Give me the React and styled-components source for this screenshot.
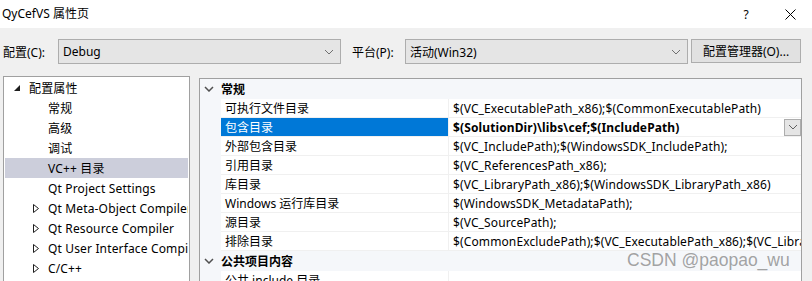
import React from 'react';
import styled, { createGlobalStyle } from 'styled-components';

const Global = createGlobalStyle`
  html, body { margin: 0; padding: 0; background: #f0f0f0; }
  body {
    font-family: "Noto Sans", "Noto Sans CJK SC", sans-serif;
    font-size: 12px;
    color: #000;
  }
  * { box-sizing: border-box; }
`;

const Dialog = styled.div`
  position: relative;
  width: 812px;
  height: 281px;
  overflow: hidden;
  background: #f0f0f0;
  display: flex;
  flex-direction: column;
`;

const TitleBar = styled.div`
  flex: none;
  height: 28px;
  background: #fff;
  display: flex;
  align-items: center;
  padding-left: 2px;
`;

const Title = styled.div`
  flex: 1;
  font-size: 12px;
  line-height: 16px;
`;

const TitleButton = styled.div`
  width: ${p => p.$w}px;
  height: 28px;
  display: flex;
  align-items: center;
  justify-content: center;
  font-size: 12px;
  color: #000;
`;

const Toolbar = styled.div`
  flex: none;
  height: 48px;
  display: flex;
  align-items: flex-start;
  padding: 11px 0 0 3px;
`;

const Label = styled.div`
  width: ${p => p.$w}px;
  margin-left: ${p => p.$ml || 0}px;
  height: 25px;
  display: flex;
  align-items: center;
  white-space: nowrap;
`;

const Select = styled.div`
  width: 283px;
  height: 25px;
  border: 1px solid #adadad;
  background: #e5e5e5;
  display: flex;
  align-items: center;
  padding: 0 6px 0 4px;
`;

const SelectText = styled.div`
  flex: 1;
  white-space: nowrap;
`;

const Button = styled.div`
  margin-left: 3px;
  width: 110px;
  height: 24px;
  border: 1px solid #adadad;
  background: #e1e1e1;
  display: flex;
  align-items: center;
  justify-content: center;
  white-space: nowrap;
`;

const Content = styled.div`
  flex: 1;
  display: flex;
  align-items: flex-start;
  padding-left: 3px;
`;

const TreePanel = styled.div`
  width: 187px;
  height: 230px;
  flex: none;
  background: #fff;
  border: 1px solid #a0a0a0;
  padding: 1px 1px 0 1px;
  overflow: hidden;
`;

const TreeRow = styled.div`
  height: 20px;
  display: flex;
  align-items: center;
  padding-left: ${p => 5 + p.$level * 19}px;
  background: ${p => (p.$selected ? '#cccedb' : 'transparent')};
  white-space: nowrap;
  overflow: hidden;
  letter-spacing: 0.15px;
`;

const Expander = styled.div`
  width: 13px;
  height: 20px;
  flex: none;
  margin-right: 6px;
  display: flex;
  align-items: center;
  justify-content: center;
`;

const GridPanel = styled.div`
  margin-left: 9px;
  margin-top: 2px;
  width: 603px;
  height: 230px;
  flex: none;
  background: #fff;
  border: 1px solid #a0a0a0;
  overflow: hidden;
`;

const CategoryRow = styled.div`
  height: 20px;
  display: flex;
  align-items: center;
  background: #f5f7fa;
  font-weight: bold;
`;

const Gutter = styled.div`
  width: 21px;
  flex: none;
  align-self: stretch;
  background: #f5f7fa;
  display: flex;
  align-items: center;
  justify-content: center;
  padding-right: 4px;
`;

const PropRow = styled.div`
  height: 19px;
  display: flex;
`;

const NameCell = styled.div`
  width: 228px;
  flex: none;
  display: flex;
  align-items: center;
  padding-left: 4px;
  border-right: 1px solid #f0f0f0;
  border-bottom: 1px solid #f0f0f0;
  background: ${p => (p.$selected ? '#0078d7' : '#fff')};
  color: ${p => (p.$selected ? '#fff' : '#000')};
  white-space: nowrap;
  overflow: hidden;
`;

const ValueCell = styled.div`
  flex: 1;
  min-width: 0;
  display: flex;
  align-items: center;
  padding-left: 4px;
  border-bottom: 1px solid #f0f0f0;
  font-weight: ${p => (p.$bold ? 'bold' : 'normal')};
  white-space: nowrap;
  overflow: hidden;
  letter-spacing: 0.12px;
`;

const ValueText = styled.div`
  flex: 1;
  min-width: 0;
  overflow: hidden;
`;

const DropButton = styled.div`
  width: 17px;
  height: 17px;
  flex: none;
  border: 1px solid #adadad;
  background: #e5e5e5;
  display: flex;
  align-items: center;
  justify-content: center;
`;

const Watermark = styled.div`
  position: absolute;
  left: 627px;
  top: 250px;
  font-family: "Liberation Sans", Arial, sans-serif;
  font-size: 17.5px;
  color: rgba(140, 140, 140, 0.8);
  white-space: nowrap;
`;

const Chevron = ({ w = 8, h = 4, color = '#606060', sw = 1 }) => (
  <svg width={w + 2} height={h + 2} viewBox={`-1 -1 ${w + 2} ${h + 2}`}>
    <polyline points={`0,0 ${w / 2},${h} ${w},0`} fill="none" stroke={color} strokeWidth={sw} />
  </svg>
);

const OpenTriangle = () => (
  <svg width="6" height="6" viewBox="0 0 6 6">
    <polygon points="6,0 6,6 0,6" fill="#1e1e1e" />
  </svg>
);

const ClosedTriangle = () => (
  <svg width="6" height="9" viewBox="0 0 6 9">
    <polygon points="0.5,0.5 5.5,4.5 0.5,8.5" fill="none" stroke="#1e1e1e" strokeWidth="1" />
  </svg>
);

const CloseIcon = () => (
  <svg width="11" height="11" viewBox="0 0 11 11">
    <path d="M0.5 0.5 L10.5 10.5 M10.5 0.5 L0.5 10.5" stroke="#000" strokeWidth="1" />
  </svg>
);

const tree = [
  { label: '配置属性', level: 0, exp: 'open' },
  { label: '常规', level: 1 },
  { label: '高级', level: 1 },
  { label: '调试', level: 1 },
  { label: 'VC++ 目录', level: 1, selected: true },
  { label: 'Qt Project Settings', level: 1 },
  { label: 'Qt Meta-Object Compiler', level: 1, exp: 'closed' },
  { label: 'Qt Resource Compiler', level: 1, exp: 'closed' },
  { label: 'Qt User Interface Compiler', level: 1, exp: 'closed' },
  { label: 'C/C++', level: 1, exp: 'closed' },
  { label: '链接器', level: 1, exp: 'closed' },
];

const general = [
  { name: '可执行文件目录', value: '$(VC_ExecutablePath_x86);$(CommonExecutablePath)' },
  { name: '包含目录', value: '$(SolutionDir)\\libs\\cef;$(IncludePath)', selected: true, bold: true },
  { name: '外部包含目录', value: '$(VC_IncludePath);$(WindowsSDK_IncludePath);' },
  { name: '引用目录', value: '$(VC_ReferencesPath_x86);' },
  { name: '库目录', value: '$(VC_LibraryPath_x86);$(WindowsSDK_LibraryPath_x86)' },
  { name: 'Windows 运行库目录', value: '$(WindowsSDK_MetadataPath);' },
  { name: '源目录', value: '$(VC_SourcePath);' },
  { name: '排除目录', value: '$(CommonExcludePath);$(VC_ExecutablePath_x86);$(VC_LibraryPath_x86)' },
];

const publicItems = [{ name: '公共 include 目录', value: '' }];

function Rows({ items }) {
  return items.map(r => (
    <PropRow key={r.name}>
      <Gutter />
      <NameCell $selected={r.selected}>{r.name}</NameCell>
      <ValueCell $bold={r.bold}>
        <ValueText>{r.value}</ValueText>
        {r.selected && (
          <DropButton>
            <Chevron w={8} h={4} color="#606060" />
          </DropButton>
        )}
      </ValueCell>
    </PropRow>
  ));
}

export default function App() {
  return (
    <>
      <Global />
      <Dialog>
        <TitleBar>
          <Title>QyCefVS 属性页</Title>
          <TitleButton $w={46}>?</TitleButton>
          <TitleButton $w={43}><CloseIcon /></TitleButton>
        </TitleBar>
        <Toolbar>
          <Label $w={55}>配置(C):</Label>
          <Select>
            <SelectText>Debug</SelectText>
            <Chevron w={8} h={4} color="#707070" />
          </Select>
          <Label $w={53} $ml={11}>平台(P):</Label>
          <Select>
            <SelectText>活动(Win32)</SelectText>
            <Chevron w={8} h={4} color="#707070" />
          </Select>
          <Button>配置管理器(O)...</Button>
        </Toolbar>
        <Content>
          <TreePanel>
            {tree.map(t => (
              <TreeRow key={t.label} $level={t.level} $selected={t.selected}>
                <Expander>
                  {t.exp === 'open' && <OpenTriangle />}
                  {t.exp === 'closed' && <ClosedTriangle />}
                </Expander>
                {t.label}
              </TreeRow>
            ))}
          </TreePanel>
          <GridPanel>
            <CategoryRow>
              <Gutter><Chevron w={8} h={4} color="#505050" sw={1.5} /></Gutter>
              常规
            </CategoryRow>
            <Rows items={general} />
            <CategoryRow>
              <Gutter><Chevron w={8} h={4} color="#505050" sw={1.5} /></Gutter>
              公共项目内容
            </CategoryRow>
            <Rows items={publicItems} />
          </GridPanel>
        </Content>
        <Watermark>CSDN @paopao_wu</Watermark>
      </Dialog>
    </>
  );
}
